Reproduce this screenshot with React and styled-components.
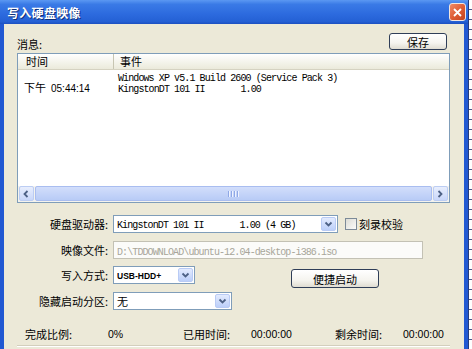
import React from 'react'
import styled, { createGlobalStyle } from 'styled-components'

const GlobalStyle = createGlobalStyle`
  html, body {
    margin: 0;
    padding: 0;
    background: #fff;
  }
  body {
    font-family: "Noto Sans CJK SC", "Liberation Sans", sans-serif;
    font-size: 11px;
    color: #000;
  }
`

const Screen = styled.div`
  display: flex;
  width: 472px;
  height: 349px;
  overflow: hidden;
`
const Window = styled.div`
  width: 468px;
  display: flex;
  flex-direction: column;
`
const TitleBar = styled.div`
  height: 24px;
  flex: none;
  display: flex;
  align-items: center;
  justify-content: space-between;
  padding: 0 2px 0 7px;
  background: linear-gradient(#5b98f2 0%, #3a7ae6 18%, #2c6ade 60%, #2460d4 90%, #1b4fc0 100%);
`
const Title = styled.span`
  color: #fff;
  font-weight: bold;
  font-size: 12px;
  letter-spacing: 0.3px;
  text-shadow: 1px 1px 0 #10307a;
`
const CloseButton = styled.div`
  width: 17px;
  height: 18px;
  box-sizing: border-box;
  border: 1px solid #f2e6e0;
  border-radius: 3px;
  background: linear-gradient(135deg, #f08a68 0%, #dd5a32 55%, #c24420 100%);
  display: flex;
  align-items: center;
  justify-content: center;
`
const Frame = styled.div`
  flex: 1;
  display: flex;
  flex-direction: column;
  background: #ece9d8;
  border-left: 4px solid #2158d2;
  border-right: 4px solid #2158d2;
  padding: 9px 14px 0 13px;
`
const TopRow = styled.div`
  height: 17px;
  display: flex;
  align-items: center;
  justify-content: space-between;
  padding-right: 3px;
`
const Caption = styled.span`
  margin-top: 4px;
`
const PushButton = styled.div`
  width: ${p => p.$w}px;
  height: ${p => p.$h}px;
  box-sizing: border-box;
  border: 1px solid #2f3e58;
  border-radius: 3px;
  background: linear-gradient(#ffffff 0%, #f5f4ef 60%, #e0ddd2 100%);
  display: flex;
  align-items: center;
  justify-content: center;
  margin-left: ${p => p.$ml || 0}px;
  align-self: ${p => (p.$ml ? 'flex-start' : 'auto')};
  margin-top: ${p => p.$mt || 0}px;
`
const ListBox = styled.div`
  margin-top: 3px;
  height: 150px;
  box-sizing: border-box;
  border: 1px solid #7f9db9;
  background: #fff;
  display: flex;
  flex-direction: column;
`
const ListHeader = styled.div`
  height: 15px;
  flex: none;
  display: flex;
  background: linear-gradient(#ffffff, #ebeadb);
  border-bottom: 1px solid #d5d2c1;
`
const HeaderCell = styled.div`
  width: ${p => (p.$w ? `${p.$w}px` : 'auto')};
  flex: ${p => (p.$w ? 'none' : 1)};
  box-sizing: border-box;
  padding-left: ${p => p.$pl}px;
  line-height: 15px;
  border-right: ${p => (p.$w ? '1px solid #c7c5b2' : 'none')};
`
const Rows = styled.div`
  flex: 1;
  padding-top: 1px;
`
const Row = styled.div`
  display: flex;
  height: 11px;
  line-height: 11px;
`
const TimeCell = styled.div`
  width: 96px;
  flex: none;
  padding-left: 6px;
  box-sizing: border-box;
  white-space: nowrap;
`
const Clock = styled.span`
  font-family: "Liberation Sans", sans-serif;
  font-size: 10px;
  margin-left: 5px;
`
const Mono = styled.span`
  font-family: "Liberation Mono", monospace;
  font-size: 10px;
  letter-spacing: -0.9px;
  white-space: pre;
  color: ${p => p.$muted ? '#a8a69a' : '#000'};
`
const EventCell = styled.div`
  padding-left: 4px;
`
const HScroll = styled.div`
  height: 15px;
  flex: none;
  display: flex;
  background: #f4f3ee;
  padding: 0 1px 1px;
`
const ScrollArrow = styled.div`
  width: 15px;
  box-sizing: border-box;
  border: 1px solid #bccdf3;
  border-radius: 2px;
  background: linear-gradient(#e8eefd, #c9d7fa);
  display: flex;
  align-items: center;
  justify-content: center;
`
const ScrollThumb = styled.div`
  flex: 1;
  margin: 0 1px;
  box-sizing: border-box;
  border: 1px solid #a9bdf0;
  border-radius: 2px;
  background: linear-gradient(#d2defb, #b8cbf6);
  display: flex;
  align-items: center;
  justify-content: center;
  gap: 1px;
`
const Grip = styled.span`
  width: 1px;
  height: 6px;
  background: #8fa8e6;
  box-shadow: 1px 0 0 #eef3ff;
  margin-right: 1px;
`
const Form = styled.div`
  margin-top: 12px;
  display: grid;
  grid-template-columns: 92px 1fr;
  column-gap: 4px;
  grid-auto-rows: 18px;
  row-gap: 7.7px;
`
const FieldLabel = styled.div`
  text-align: right;
  line-height: 18px;
  padding-right: 1px;
`
const Field = styled.div`
  display: flex;
  align-items: center;
`
const ComboBox = styled.div`
  width: ${p => p.$w}px;
  height: 18px;
  box-sizing: border-box;
  border: 1px solid #7f9db9;
  background: #fff;
  display: flex;
  align-items: center;
`
const ComboValue = styled.div`
  flex: 1;
  padding-left: 3px;
  line-height: 16px;
  overflow: hidden;
  white-space: nowrap;
`
const SmallSans = styled.span`
  font-family: "Liberation Sans", sans-serif;
  font-size: 8.5px;
  font-weight: bold;
`
const ComboArrow = styled.div`
  width: 15px;
  height: 14px;
  margin-right: 1px;
  box-sizing: border-box;
  border: 1px solid #b9cbf5;
  border-radius: 2px;
  background: linear-gradient(#e3ebfe, #bccff9);
  display: flex;
  align-items: center;
  justify-content: center;
`
const CheckBox = styled.div`
  width: 12px;
  height: 12px;
  margin-left: 7px;
  margin-right: 2px;
  box-sizing: border-box;
  border: 1px solid #7c8a98;
  background: linear-gradient(135deg, #dcdcd6, #fbfbf9);
`
const TextField = styled.div`
  width: ${p => p.$w}px;
  height: 18px;
  box-sizing: border-box;
  border: 1px solid #c3c1b4;
  background: #fbfbf9;
  padding-left: 3px;
  line-height: 16px;
  white-space: nowrap;
  overflow: hidden;
`
const StatusRow = styled.div`
  margin-top: 17px;
  height: 14px;
  display: flex;
  align-items: center;
  padding-left: 8px;
`
const StatusCell = styled.span`
  width: ${p => p.$w}px;
  flex: none;
  font-family: ${p => (p.$num ? '"Liberation Sans", sans-serif' : 'inherit')};
  font-size: ${p => (p.$num ? '10.5px' : '11px')};
`
const Groove = styled.div`
  margin-top: auto;
  height: 3px;
  border-top: 1px solid #d3cfbd;
  box-shadow: inset 0 1px 0 #fff;
`
const Strip = styled.div`
  flex: 1;
  background: #fff;
  border-left: 1px solid #233b7e;
  background-image: repeating-linear-gradient(#fff 0 9px, #4a5a8e 9px 10px);
`

const Chevron = ({ dir = 'down', color = '#4d6185' }) => {
  const d = {
    down: 'M1.5 2.5 L4.5 5.5 L7.5 2.5',
    left: 'M5.5 1 L2.5 4 L5.5 7',
    right: 'M2.5 1 L5.5 4 L2.5 7',
  }[dir]
  return (
    <svg width="9" height="8" viewBox="0 0 9 8">
      <path d={d} fill="none" stroke={color} strokeWidth="1.8" />
    </svg>
  )
}

const Combo = ({ width, children }) => (
  <ComboBox $w={width}>
    <ComboValue>{children}</ComboValue>
    <ComboArrow><Chevron /></ComboArrow>
  </ComboBox>
)

export default function App() {
  return (
    <Screen>
      <GlobalStyle />
      <Window>
        <TitleBar>
          <Title>写入硬盘映像</Title>
          <CloseButton>
            <svg width="9" height="9" viewBox="0 0 9 9">
              <path d="M1 1 L8 8 M8 1 L1 8" stroke="#fff" strokeWidth="1.8" />
            </svg>
          </CloseButton>
        </TitleBar>
        <Frame>
          <TopRow>
            <Caption>消息:</Caption>
            <PushButton $w={58} $h={17}>保存</PushButton>
          </TopRow>
          <ListBox>
            <ListHeader>
              <HeaderCell $w={96} $pl={8}>时间</HeaderCell>
              <HeaderCell $pl={6}>事件</HeaderCell>
            </ListHeader>
            <Rows>
              <Row>
                <TimeCell />
                <EventCell><Mono>Windows XP v5.1 Build 2600 (Service Pack 3)</Mono></EventCell>
              </Row>
              <Row>
                <TimeCell>下午<Clock>05:44:14</Clock></TimeCell>
                <EventCell><Mono>KingstonDT 101 II       1.00</Mono></EventCell>
              </Row>
            </Rows>
            <HScroll>
              <ScrollArrow><Chevron dir="left" /></ScrollArrow>
              <ScrollThumb>
                <Grip /><Grip /><Grip /><Grip />
              </ScrollThumb>
              <ScrollArrow><Chevron dir="right" /></ScrollArrow>
            </HScroll>
          </ListBox>
          <Form>
            <FieldLabel>硬盘驱动器:</FieldLabel>
            <Field>
              <Combo width={225}><Mono>KingstonDT 101 II       1.00 (4 GB)</Mono></Combo>
              <CheckBox />
              <span>刻录校验</span>
            </Field>
            <FieldLabel>映像文件:</FieldLabel>
            <Field>
              <TextField $w={310}><Mono $muted>D:\TDDOWNLOAD\ubuntu-12.04-desktop-i386.iso</Mono></TextField>
            </Field>
            <FieldLabel>写入方式:</FieldLabel>
            <Field>
              <Combo width={82}><SmallSans>USB-HDD+</SmallSans></Combo>
              <PushButton $w={88} $h={19} $ml={96} $mt={3}>便捷启动</PushButton>
            </Field>
            <FieldLabel>隐藏启动分区:</FieldLabel>
            <Field>
              <Combo width={119}>无</Combo>
            </Field>
          </Form>
          <StatusRow>
            <StatusCell $w={83}>完成比例:</StatusCell>
            <StatusCell $w={75} $num>0%</StatusCell>
            <StatusCell $w={68}>已用时间:</StatusCell>
            <StatusCell $w={84} $num>00:00:00</StatusCell>
            <StatusCell $w={68}>剩余时间:</StatusCell>
            <StatusCell $w={50} $num>00:00:00</StatusCell>
          </StatusRow>
          <Groove />
        </Frame>
      </Window>
      <Strip />
    </Screen>
  )
}
